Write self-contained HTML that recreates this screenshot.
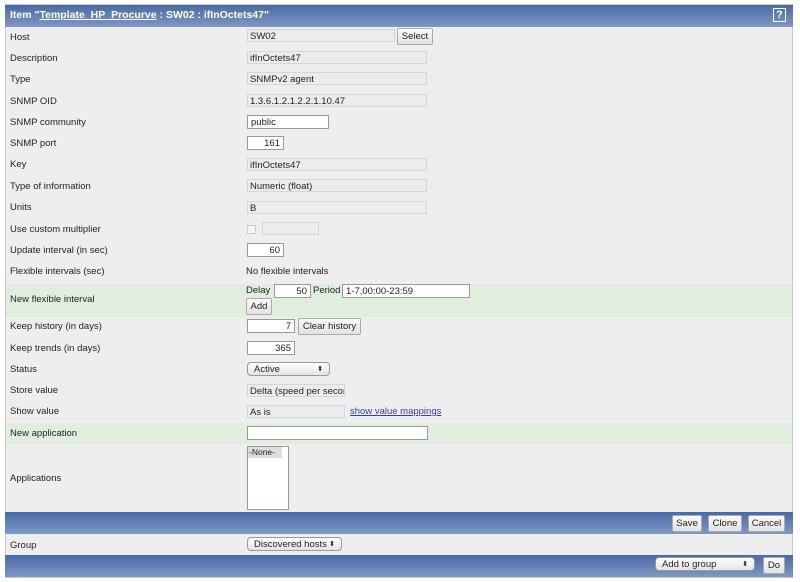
<!DOCTYPE html><html><head><style>
body{margin:0;width:800px;height:582px;background:#fff;font-family:"Liberation Sans",sans-serif;font-size:9.5px;color:#222;position:relative;overflow:hidden}
.frame{position:absolute;left:5px;top:4px;width:788px;height:574px;background:#eeeeee;border:1px solid #c8c8c8;box-sizing:border-box}
.bar{position:absolute;left:5px;width:788px;background:linear-gradient(#4a6aa6,#7f98c4);}
.l{position:absolute;left:10px}
.a{position:absolute}
.ro{position:absolute;background:#ececec;border:1px solid #d6d6d6;height:13px;box-sizing:border-box;padding:1px 2px 0;line-height:11px}
.in{position:absolute;background:#fff;border:1px solid #999;height:14px;box-sizing:border-box;padding:1px 3px 0;line-height:12px}
.btn{position:absolute;background:linear-gradient(#fafafa,#e2e2e2);border:1px solid #aaa;box-sizing:border-box;height:17px;line-height:15px;text-align:center;border-radius:2px}
.sel{position:absolute;background:linear-gradient(#fdfdfd,#e4e4e4);border:1px solid #999;border-radius:4px;height:14px;box-sizing:border-box;padding:1px 6px 0;line-height:12px}
.green{position:absolute;left:6px;width:786px;background:#e0eee0}
.r{text-align:right}
</style></head><body>
<div class="frame"></div>
<div class="bar" style="top:5px;height:22px"></div>
<div class="a" style="left:10px;top:9px;color:#fff;font-weight:bold;font-size:10.5px">Item "<span style="text-decoration:underline">Template_HP_Procurve</span> : SW02 : ifInOctets47"</div>
<div class="a" style="left:773px;top:8px;width:13px;height:14px;border:1px solid #fff;box-sizing:border-box;color:#fff;font-weight:bold;font-size:11px;line-height:12px;text-align:center">?</div>
<div class="green" style="top:284px;height:33px"></div>
<div class="green" style="top:423px;height:21px"></div>

<div class="l" style="top:32px">Host</div>
<div class="ro" style="left:247px;top:29px;width:148px">SW02</div>
<div class="btn" style="left:397px;top:28px;width:36px">Select</div>
<div class="l" style="top:53px">Description</div>
<div class="ro" style="left:247px;top:51px;width:180px">ifInOctets47</div>
<div class="l" style="top:74px">Type</div>
<div class="ro" style="left:247px;top:72px;width:180px">SNMPv2 agent</div>
<div class="l" style="top:96px">SNMP OID</div>
<div class="ro" style="left:247px;top:94px;width:180px">1.3.6.1.2.1.2.2.1.10.47</div>
<div class="l" style="top:117px">SNMP community</div>
<div class="in" style="left:247px;top:115px;width:82px">public</div>
<div class="l" style="top:138px">SNMP port</div>
<div class="in r" style="left:247px;top:136px;width:37px">161</div>
<div class="l" style="top:159px">Key</div>
<div class="ro" style="left:247px;top:158px;width:180px">ifInOctets47</div>
<div class="l" style="top:181px">Type of information</div>
<div class="ro" style="left:247px;top:179px;width:180px">Numeric (float)</div>
<div class="l" style="top:202px">Units</div>
<div class="ro" style="left:247px;top:201px;width:180px">B</div>
<div class="l" style="top:224px">Use custom multiplier</div>
<div class="a" style="left:247px;top:225px;width:7px;height:7px;border:1px solid #ccc;background:#f4f4f4"></div>
<div class="ro" style="left:262px;top:222px;width:57px"></div>
<div class="l" style="top:245px">Update interval (in sec)</div>
<div class="in r" style="left:247px;top:243px;width:37px">60</div>
<div class="l" style="top:266px">Flexible intervals (sec)</div>
<div class="a" style="left:246px;top:266px">No flexible intervals</div>
<div class="l" style="top:294px">New flexible interval</div>
<div class="a" style="left:246px;top:285px">Delay</div>
<div class="in r" style="left:274px;top:284px;width:37px">50</div>
<div class="a" style="left:313px;top:285px">Period</div>
<div class="in" style="left:342px;top:284px;width:128px">1-7,00:00-23:59</div>
<div class="btn" style="left:246px;top:298px;width:26px">Add</div>
<div class="l" style="top:321px">Keep history (in days)</div>
<div class="in r" style="left:247px;top:319px;width:48px">7</div>
<div class="btn" style="left:298px;top:318px;width:63px">Clear history</div>
<div class="l" style="top:343px">Keep trends (in days)</div>
<div class="in r" style="left:247px;top:341px;width:48px">365</div>
<div class="l" style="top:364px">Status</div>
<div class="sel" style="left:247px;top:362px;width:83px">Active<span style="float:right;font-size:7px">⬍</span></div>
<div class="l" style="top:385px">Store value</div>
<div class="ro" style="left:247px;top:384px;width:98px;overflow:hidden;white-space:nowrap">Delta (speed per second)</div>
<div class="l" style="top:406px">Show value</div>
<div class="ro" style="left:247px;top:405px;width:98px">As is</div>
<div class="a" style="left:350px;top:406px;color:#3b3bb0;text-decoration:underline">show value mappings</div>
<div class="l" style="top:428px">New application</div>
<div class="in" style="left:247px;top:426px;width:181px"></div>
<div class="l" style="top:473px">Applications</div>
<div class="a" style="left:247px;top:446px;width:42px;height:64px;border:1px solid #999;background:#fff;box-sizing:border-box"><div style="background:#ddd;width:33px;padding-left:1px;font-size:8.5px;line-height:11px">-None-</div></div>

<div class="bar" style="top:512px;height:22px"></div>
<div class="btn" style="left:672px;top:515px;width:30px">Save</div>
<div class="btn" style="left:708px;top:515px;width:34px">Clone</div>
<div class="btn" style="left:748px;top:515px;width:37px">Cancel</div>
<div class="l" style="top:540px">Group</div>
<div class="sel" style="left:247px;top:537px;width:95px">Discovered hosts<span style="float:right;font-size:7px">⬍</span></div>
<div class="bar" style="top:555px;height:22px"></div>
<div class="sel" style="left:655px;top:557px;width:100px">Add to group<span style="float:right;font-size:7px">⬍</span></div>
<div class="btn" style="left:763px;top:557px;width:22px">Do</div>
</body></html>
